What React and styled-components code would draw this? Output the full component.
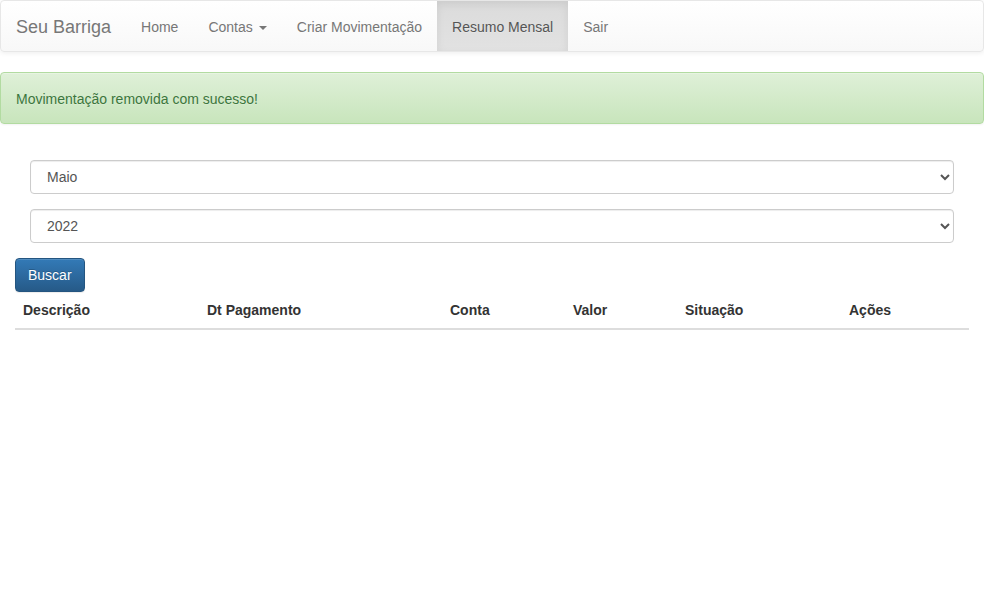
import React, { useState } from "react";
import styled, { createGlobalStyle } from "styled-components";

const GlobalStyle = createGlobalStyle`
  * { box-sizing: border-box; }
  body {
    margin: 0;
    font-family: "Liberation Sans", Arial, sans-serif;
    font-size: 14px;
    line-height: 1.42857;
    color: #333;
    background: #fff;
  }
`;

const Navbar = styled.nav`
  display: flex;
  align-items: stretch;
  height: 52px;
  margin-bottom: 20px;
  border: 1px solid #e7e7e7;
  border-radius: 4px;
  background-image: linear-gradient(to bottom, #fff 0, #f8f8f8 100%);
  box-shadow: inset 0 1px 0 rgba(255, 255, 255, 0.15),
    0 1px 5px rgba(0, 0, 0, 0.075);
`;

const Brand = styled.a`
  padding: 16px 15px 14px;
  font-size: 18px;
  line-height: 20px;
  color: #777;
  text-decoration: none;
  text-shadow: 0 1px 0 rgba(255, 255, 255, 0.25);
`;

const NavList = styled.ul`
  display: flex;
  margin: 0;
  padding: 0;
  list-style: none;
`;

const NavLink = styled.a`
  display: flex;
  align-items: center;
  height: 50px;
  padding: 3px 15px 0;
  color: ${(p) => (p.$active ? "#555" : "#777")};
  text-decoration: none;
  text-shadow: 0 1px 0 rgba(255, 255, 255, 0.25);
  background-image: ${(p) =>
    p.$active ? "linear-gradient(to bottom, #dbdbdb 0, #e2e2e2 100%)" : "none"};
  box-shadow: ${(p) =>
    p.$active ? "inset 0 3px 9px rgba(0, 0, 0, 0.075)" : "none"};
`;

const Caret = styled.span`
  display: inline-block;
  width: 0;
  height: 0;
  margin-left: 6px;
  border-top: 4px solid #777;
  border-right: 4px solid transparent;
  border-left: 4px solid transparent;
`;

const Alert = styled.div`
  margin-bottom: 20px;
  padding: 16px 15px 14px;
  border: 1px solid #b2dba1;
  border-radius: 4px;
  line-height: 20px;
  color: #3c763d;
  background-image: linear-gradient(to bottom, #dff0d8 0, #c8e5bc 100%);
  text-shadow: 0 1px 0 rgba(255, 255, 255, 0.2);
  box-shadow: inset 0 1px 0 rgba(255, 255, 255, 0.25),
    0 1px 2px rgba(0, 0, 0, 0.05);
`;

const Container = styled.div`
  padding: 16px 15px 0;
`;

const FormGroup = styled.div`
  padding: 0 15px;
  margin-bottom: 15px;
`;

const Select = styled.select`
  display: block;
  width: 100%;
  height: 34px;
  padding: 6px 8px 6px 12px;
  font-family: inherit;
  font-size: 14px;
  color: #555;
  background: #fff;
  border: 1px solid #ccc;
  border-radius: 4px;
  box-shadow: inset 0 1px 1px rgba(0, 0, 0, 0.075);
  outline: none;
`;

const Button = styled.button`
  height: 34px;
  padding: 6px 12px;
  font-family: inherit;
  font-size: 14px;
  line-height: 20px;
  color: #fff;
  border: 1px solid #245580;
  border-radius: 4px;
  background-image: linear-gradient(to bottom, #337ab7 0, #265a88 100%);
  text-shadow: 0 -1px 0 rgba(0, 0, 0, 0.2);
  box-shadow: inset 0 1px 0 rgba(255, 255, 255, 0.15),
    0 1px 1px rgba(0, 0, 0, 0.075);
  cursor: pointer;
`;

const Table = styled.table`
  width: 100%;
  border-collapse: collapse;
  border-spacing: 0;
`;

const Th = styled.th`
  width: ${(p) => p.$w}px;
  padding: 8px;
  text-align: left;
  line-height: 20px;
  font-weight: bold;
  color: #333;
  border-bottom: 2px solid #ddd;
`;

const months = [
  "Janeiro", "Fevereiro", "Março", "Abril", "Maio", "Junho",
  "Julho", "Agosto", "Setembro", "Outubro", "Novembro", "Dezembro",
];

const columns = [
  ["Descrição", 184],
  ["Dt Pagamento", 243],
  ["Conta", 123],
  ["Valor", 112],
  ["Situação", 164],
  ["Ações", 128],
];

export default function App() {
  const [month, setMonth] = useState("5");
  const [year, setYear] = useState("2022");

  return (
    <>
      <GlobalStyle />
      <Navbar>
        <Brand href="#">Seu Barriga</Brand>
        <NavList>
          <li><NavLink href="#">Home</NavLink></li>
          <li>
            <NavLink href="#">
              Contas <Caret />
            </NavLink>
          </li>
          <li><NavLink href="#">Criar Movimentação</NavLink></li>
          <li><NavLink href="#" $active>Resumo Mensal</NavLink></li>
          <li><NavLink href="#">Sair</NavLink></li>
        </NavList>
      </Navbar>

      <Alert>Movimentação removida com sucesso!</Alert>

      <Container>
        <form onSubmit={(e) => e.preventDefault()}>
          <FormGroup>
            <Select value={month} onChange={(e) => setMonth(e.target.value)}>
              {months.map((m, i) => (
                <option key={m} value={String(i + 1)}>
                  {m}
                </option>
              ))}
            </Select>
          </FormGroup>
          <FormGroup>
            <Select value={year} onChange={(e) => setYear(e.target.value)}>
              {["2020", "2021", "2022", "2023"].map((y) => (
                <option key={y} value={y}>
                  {y}
                </option>
              ))}
            </Select>
          </FormGroup>
          <Button type="submit">Buscar</Button>
        </form>
        <Table>
          <thead>
            <tr>
              {columns.map(([label, w]) => (
                <Th key={label} $w={w}>
                  {label}
                </Th>
              ))}
            </tr>
          </thead>
          <tbody />
        </Table>
      </Container>
    </>
  );
}
